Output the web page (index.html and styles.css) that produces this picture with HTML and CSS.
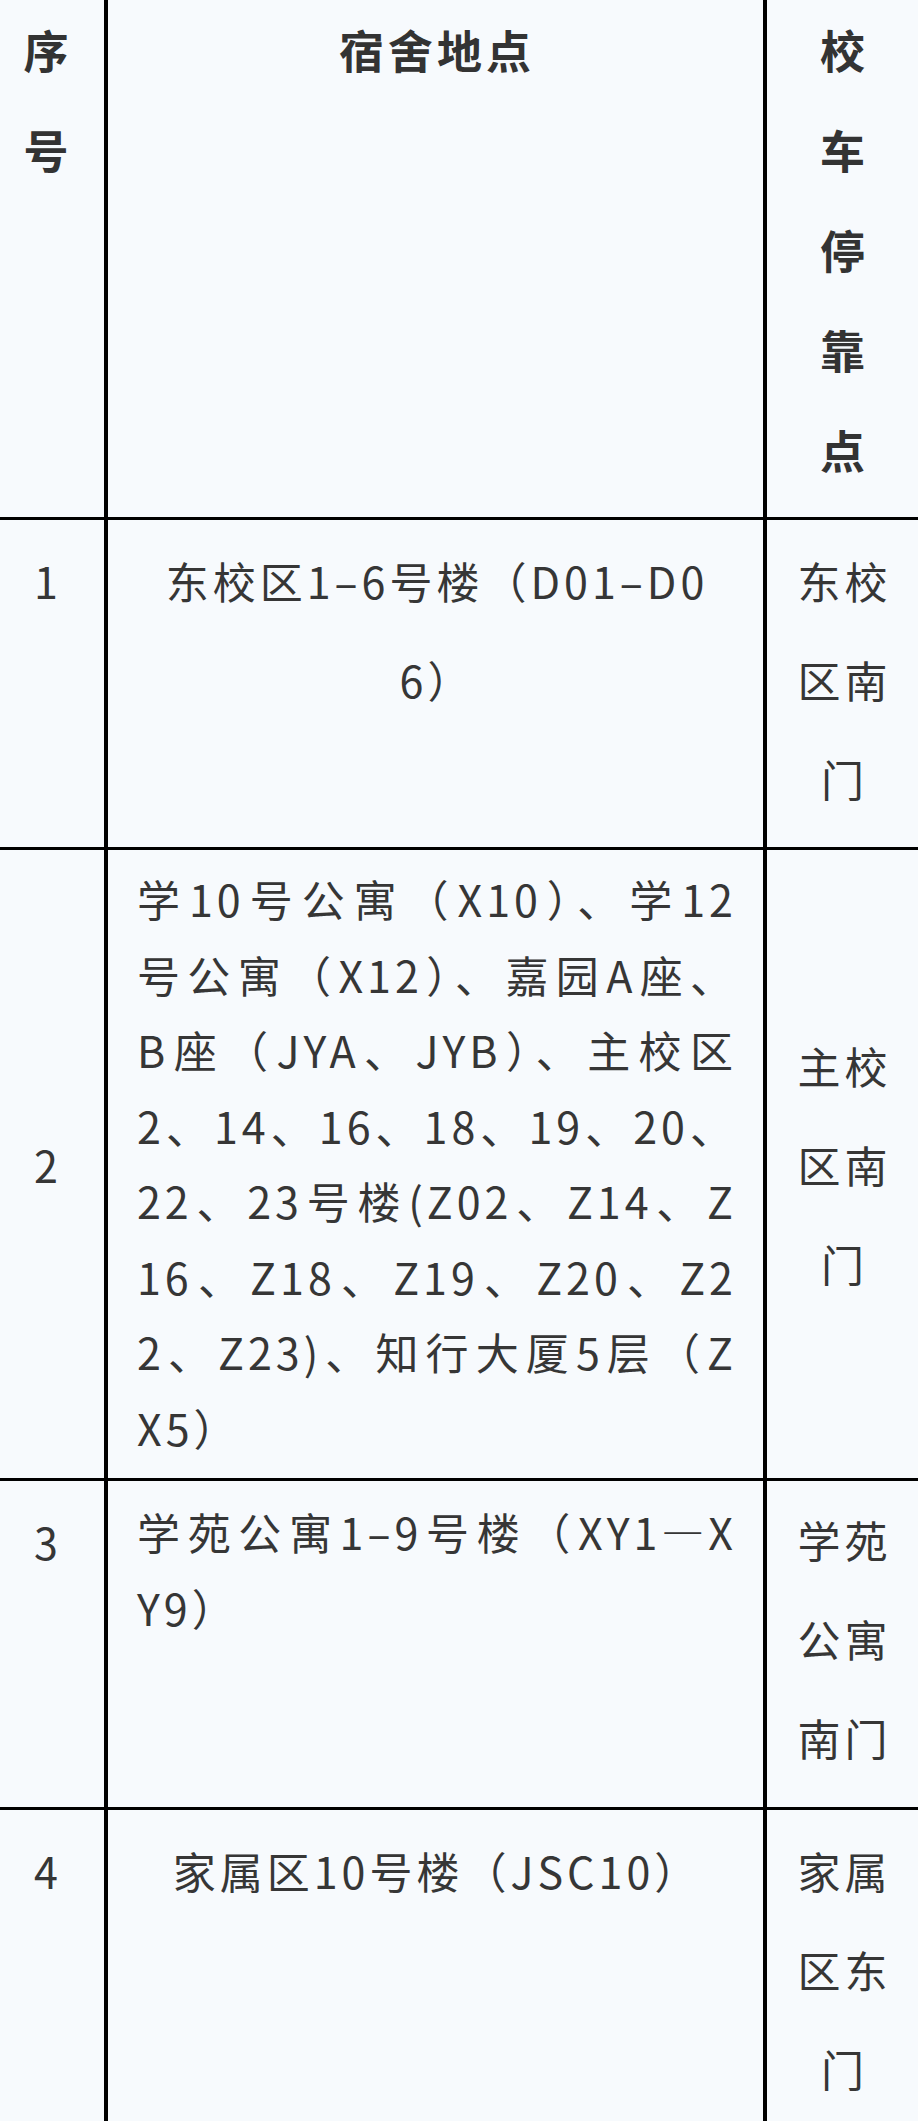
FILE: index.html
```html
<!DOCTYPE html>
<html lang="zh-CN">
<head>
<meta charset="utf-8">
<title>宿舍地点与校车停靠点</title>
<link rel="stylesheet" href="styles.css">
</head>
<body>
<div class="sheet">
  <div class="cell col-no head">序<br>号</div>
  <div class="cell col-place head">宿舍地点</div>
  <div class="cell col-stop head">校<br>车<br>停<br>靠<br>点</div>

  <div class="cell col-no tall">1</div>
  <div class="cell col-place tall center">
    <span class="ln">东校区1–6号楼（D01–D0</span>
    <span class="ln">6）</span>
  </div>
  <div class="cell col-stop tall">东校区南门</div>

  <div class="cell col-no tall mid">2</div>
  <div class="cell col-place dense">
    <span class="ln just">学10号公寓（X10）、学12</span>
    <span class="ln just">号公寓（X12）、嘉园A座、</span>
    <span class="ln just">B座（JYA、JYB）、主校区</span>
    <span class="ln just">2、14、16、18、19、20、</span>
    <span class="ln just">22、23号楼(Z02、Z14、Z</span>
    <span class="ln just">16、Z18、Z19、Z20、Z2</span>
    <span class="ln just">2、Z23)、知行大厦5层（Z</span>
    <span class="ln">X5）</span>
  </div>
  <div class="cell col-stop tall mid">主校区南门</div>

  <div class="cell col-no tall">3</div>
  <div class="cell col-place dense low">
    <span class="ln just">学苑公寓1–9号楼（XY1—X</span>
    <span class="ln">Y9）</span>
  </div>
  <div class="cell col-stop tall top8">学苑公寓南门</div>

  <div class="cell col-no tall">4</div>
  <div class="cell col-place tall center">
    <span class="ln">家属区10号楼（JSC10）</span>
  </div>
  <div class="cell col-stop tall">家属区东门</div>
</div>
</body>
</html>
```

FILE: styles.css
```css
html, body {
  margin: 0;
  padding: 0;
  overflow: hidden;
  background: #f7fafd;
}

.sheet {
  display: grid;
  grid-template-columns: 104px 655px 151px;
  grid-template-rows: 517px 327px 628px 326px 311px;
  column-gap: 4px;
  row-gap: 3px;
  width: 918px;
  background: #000;
  font-family: "Noto Sans CJK SC", "Noto Sans", sans-serif;
  color: #363636;
}

.cell {
  background: #f7fafd;
  box-sizing: border-box;
  font-size: 43px;
  letter-spacing: 4px;
  padding-top: 11px;
}

.col-no {
  text-align: center;
  padding-left: 0;
  padding-right: 8px;
}

.col-place {
  padding-left: 29px;
  padding-right: 26px;
}

.col-stop {
  text-align: center;
  padding-left: 22px;
  padding-right: 18px;
}

.head {
  font-size: 45px;
  font-weight: 700;
  line-height: 100px;
  color: #333;
  padding-top: 0;
}

.head.col-place {
  text-align: center;
}

.tall {
  line-height: 99px;
}

.dense {
  line-height: 75.5px;
}

.low {
  padding-top: 13px;
}

.top8 {
  padding-top: 9px;
}

.center {
  text-align: center;
}

.mid {
  display: flex;
  flex-direction: column;
  justify-content: center;
  padding-top: 0;
}

.ln {
  display: block;
}

.just {
  text-align: justify;
  text-align-last: justify;
}
```
